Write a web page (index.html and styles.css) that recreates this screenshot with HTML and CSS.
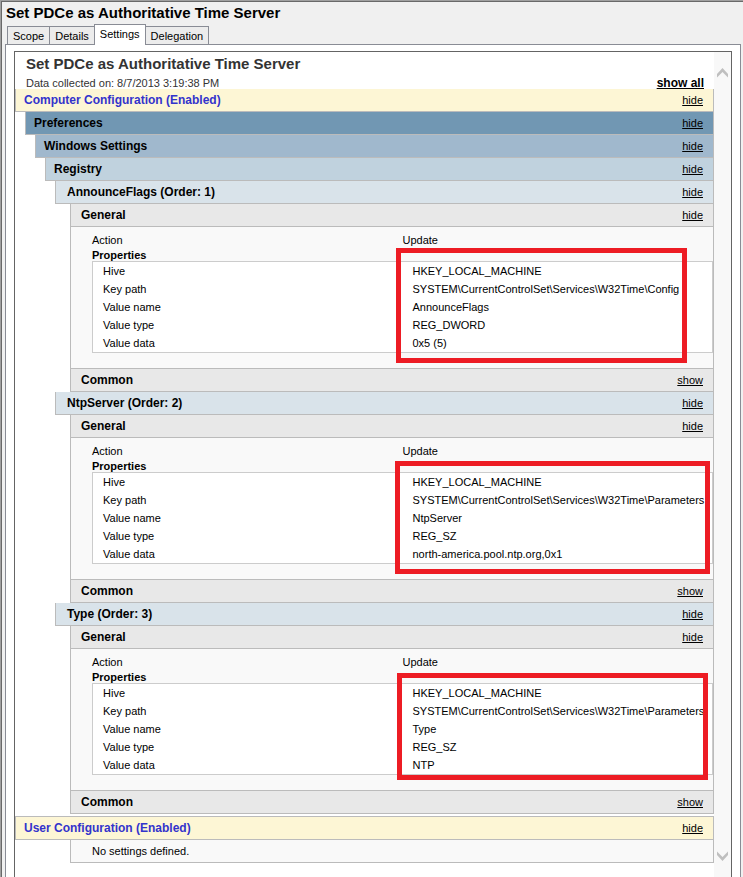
FILE: index.html
```html
<!DOCTYPE html>
<html lang="en">
<head>
<meta charset="utf-8">
<title>Set PDCe as Authoritative Time Server</title>
<link rel="stylesheet" href="styles.css">
</head>
<body>
<div class="window">
  <h1 class="window-title">Set PDCe as Authoritative Time Server</h1>
  <div class="tabs" role="tablist">
    <button class="tab" role="tab" type="button">Scope</button>
    <button class="tab" role="tab" type="button">Details</button>
    <button class="tab tab-active" role="tab" type="button" aria-selected="true">Settings</button>
    <button class="tab" role="tab" type="button">Delegation</button>
  </div>
  <div class="panel">
    <div class="viewer">
      <main class="report">
        <header class="report-head">
          <h2 class="report-title">Set PDCe as Authoritative Time Server</h2>
          <div class="report-meta">
            <span class="collected">Data collected on: 8/7/2013 3:19:38 PM</span>
            <a class="show-all" href="#">show all</a>
          </div>
        </header>

        <div class="bar bar-config"><h3>Computer Configuration (Enabled)</h3><a href="#">hide</a></div>
        <div class="bar bar-l1"><h4>Preferences</h4><a href="#">hide</a></div>
        <div class="bar bar-l2"><h4>Windows Settings</h4><a href="#">hide</a></div>
        <div class="bar bar-l3"><h4>Registry</h4><a href="#">hide</a></div>

        <section>
          <div class="bar bar-item"><h5>AnnounceFlags (Order: 1)</h5><a href="#">hide</a></div>
          <div class="bar bar-sub"><h6>General</h6><a href="#">hide</a></div>
          <div class="body">
            <div class="action"><span>Action</span><span>Update</span></div>
            <div class="props-title">Properties</div>
            <div class="props">
              <table>
                <tr><th scope="row">Hive</th><td>HKEY_LOCAL_MACHINE</td></tr>
                <tr><th scope="row">Key path</th><td>SYSTEM\CurrentControlSet\Services\W32Time\Config</td></tr>
                <tr><th scope="row">Value name</th><td>AnnounceFlags</td></tr>
                <tr><th scope="row">Value type</th><td>REG_DWORD</td></tr>
                <tr><th scope="row">Value data</th><td>0x5 (5)</td></tr>
              </table>
              <div class="mark mark-flags"></div>
            </div>
          </div>
          <div class="bar bar-sub"><h6>Common</h6><a href="#">show</a></div>
        </section>

        <section>
          <div class="bar bar-item"><h5>NtpServer (Order: 2)</h5><a href="#">hide</a></div>
          <div class="bar bar-sub"><h6>General</h6><a href="#">hide</a></div>
          <div class="body">
            <div class="action"><span>Action</span><span>Update</span></div>
            <div class="props-title">Properties</div>
            <div class="props">
              <table>
                <tr><th scope="row">Hive</th><td>HKEY_LOCAL_MACHINE</td></tr>
                <tr><th scope="row">Key path</th><td>SYSTEM\CurrentControlSet\Services\W32Time\Parameters</td></tr>
                <tr><th scope="row">Value name</th><td>NtpServer</td></tr>
                <tr><th scope="row">Value type</th><td>REG_SZ</td></tr>
                <tr><th scope="row">Value data</th><td>north-america.pool.ntp.org,0x1</td></tr>
              </table>
              <div class="mark mark-server"></div>
            </div>
          </div>
          <div class="bar bar-sub"><h6>Common</h6><a href="#">show</a></div>
        </section>

        <section>
          <div class="bar bar-item"><h5>Type (Order: 3)</h5><a href="#">hide</a></div>
          <div class="bar bar-sub"><h6>General</h6><a href="#">hide</a></div>
          <div class="body">
            <div class="action"><span>Action</span><span>Update</span></div>
            <div class="props-title">Properties</div>
            <div class="props">
              <table>
                <tr><th scope="row">Hive</th><td>HKEY_LOCAL_MACHINE</td></tr>
                <tr><th scope="row">Key path</th><td>SYSTEM\CurrentControlSet\Services\W32Time\Parameters</td></tr>
                <tr><th scope="row">Value name</th><td>Type</td></tr>
                <tr><th scope="row">Value type</th><td>REG_SZ</td></tr>
                <tr><th scope="row">Value data</th><td>NTP</td></tr>
              </table>
              <div class="mark mark-type"></div>
            </div>
          </div>
          <div class="bar bar-sub"><h6>Common</h6><a href="#">show</a></div>
        </section>

        <div class="bar bar-config bar-user"><h3>User Configuration (Enabled)</h3><a href="#">hide</a></div>
        <p class="empty">No settings defined.</p>
      </main>
      <div class="scrollbar">
        <button class="arrow" type="button" aria-label="Scroll up"><svg width="11" height="10" viewBox="0 0 11 10"><path d="M0 6 5.500 0 11 6V9.500L5.500 4 0 9.500Z" fill="#bfbfbf"/></svg></button>
        <button class="arrow" type="button" aria-label="Scroll down"><svg width="11" height="10" viewBox="0 0 11 10"><path d="M0 4 5.500 10 11 4V.5L5.500 6 0 .5Z" fill="#bfbfbf"/></svg></button>
      </div>
    </div>
  </div>
</div>
</body>
</html>
```
FILE: styles.css
```css
* {
  box-sizing: border-box;
}

body {
  margin: 0;
  background: #f0f0f0;
  color: #000;
  font-family: "Liberation Sans", Arial, sans-serif;
  font-size: 11px;
}

h1, h2, h3, h4, h5, h6, p {
  margin: 0;
}

a {
  color: #000;
}

.window {
  display: flex;
  flex-direction: column;
  min-height: 100vh;
  padding: 0 2px 0 3px;
  border-top: 1px solid #a0a0a0;
  border-left: 1px solid #a0a0a0;
  box-shadow: inset 1px 1px 0 #696969;
}

.window-title {
  padding: 4px 2px 5px;
  font-size: 15px;
  line-height: 16px;
}

/* Tabs */
.tabs {
  display: flex;
  align-items: flex-end;
  height: 18px;
  padding-left: 4px;
}

.tab {
  height: 18px;
  margin: 0 0 0 -1px;
  padding: 0 5px;
  border: 1px solid #898c95;
  border-bottom: 0;
  background: #ececec;
  color: #000;
  font: inherit;
  font-size: 11px;
}

.tab-active {
  z-index: 1;
  height: 21px;
  margin-bottom: -1px;
  padding-bottom: 2px;
  background: #fff;
}

.panel {
  display: flex;
  flex: 1;
  margin-left: 1px;
  padding: 6px 8px 0;
  border: 1px solid #898c95;
  border-bottom: 0;
  background: #fff;
}

.viewer {
  display: flex;
  flex: 1;
  border: 1px solid #646464;
  border-bottom: 0;
}

.report {
  flex: 1;
  min-width: 0;
}

.scrollbar {
  display: flex;
  flex-direction: column;
  justify-content: space-between;
  align-items: center;
  width: 17px;
  padding: 16px 0;
  background: #f8f8f8;
}

.arrow {
  display: flex;
  padding: 0;
  border: 0;
  background: none;
}

/* Report heading */
.report-head {
  padding: 3px 10px 0 11px;
  color: #333;
}

.report-title {
  font-size: 15px;
  line-height: 18px;
}

.report-meta {
  display: flex;
  justify-content: space-between;
  padding-top: 4px;
  line-height: 12px;
}

.show-all {
  font-size: 12px;
  font-weight: bold;
}

/* Collapsible bars */
.bar {
  display: flex;
  align-items: center;
  justify-content: space-between;
  height: 23px;
  padding: 0 10px 0 8px;
  border: 1px solid #bbb;
  border-top: 0;
}

.bar h3,
.bar h4,
.bar h5,
.bar h6 {
  font-size: 12px;
  line-height: 22px;
}

.bar-config {
  background: #fdf6d5;
}

.bar-config h3 {
  color: #33c;
}

.bar-user {
  height: 24px;
  margin-top: 2px;
  border-top: 1px solid #bbb;
}

.bar-l1 {
  margin-left: 10px;
  background: #7197b3;
}

.bar-l2 {
  margin-left: 20px;
  background: #a0b8cd;
}

.bar-l3 {
  margin-left: 30px;
  background: #c0d2de;
}

.bar-item {
  margin-left: 40px;
  padding-left: 11px;
  background: #d9e3ea;
}

.bar-sub {
  margin-left: 55px;
  padding-left: 10px;
  background: #e8e8e8;
}

/* Expanded content */
.body {
  margin-left: 55px;
  padding: 5px 0 15px 21px;
  border: 1px solid #bbb;
  border-top: 0;
  background: #f9f9f9;
}

.action {
  display: grid;
  grid-template-columns: 1fr 1fr;
  line-height: 16px;
}

.props-title {
  padding-top: 1px;
  font-weight: bold;
  line-height: 12px;
}

.props {
  position: relative;
}

.props table {
  width: 100%;
  table-layout: fixed;
  border: 1px solid #ccc;
  border-spacing: 0;
  background: #fff;
}

.props th,
.props td {
  width: 50%;
  height: 18px;
  padding: 0 0 0 10px;
  font-weight: normal;
  line-height: 18px;
  text-align: left;
  white-space: nowrap;
}

/* Red call-out frames drawn over the value column */
.mark {
  position: absolute;
  border: 5px solid #ed1c24;
}

.mark-flags {
  inset: -13px 26px -10px calc(50% - 7px);
}

.mark-server {
  inset: -11px 3px -10px calc(50% - 8px);
}

.mark-type {
  inset: -10px 5px -5px calc(50% - 6px);
}

.empty {
  margin-left: 55px;
  padding-left: 21px;
  border: 1px solid #bbb;
  border-top: 0;
  background: #f9f9f9;
  line-height: 22px;
}
```
